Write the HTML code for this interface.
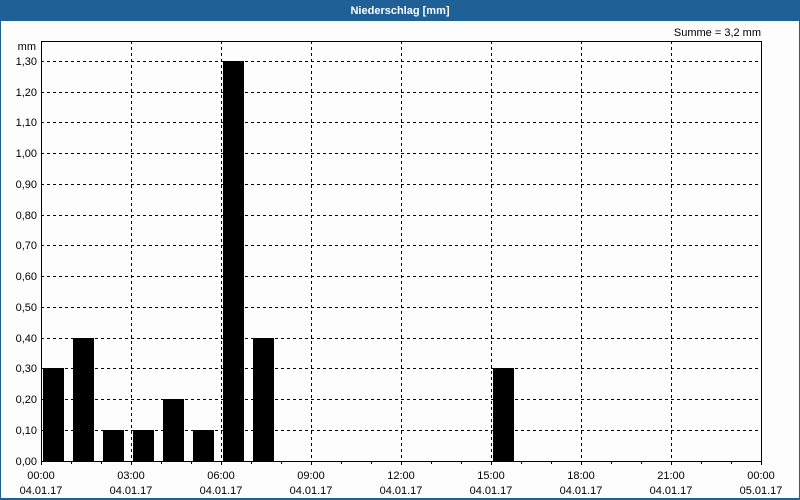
<!DOCTYPE html>
<html><head><meta charset="utf-8"><style>
html,body{margin:0;padding:0;width:800px;height:500px;overflow:hidden;background:#fff}
svg{display:block}
text{font-family:"Liberation Sans",sans-serif;font-size:11px;fill:#000}
</style></head><body>
<svg width="800" height="500" viewBox="0 0 800 500">
<rect x="0" y="0" width="800" height="500" fill="#1f6196"/>
<rect x="1" y="21" width="798" height="477" fill="#fdfdfd"/>
<text x="400" y="14" text-anchor="middle" style="font-weight:bold;fill:#fff">Niederschlag [mm]</text>
<text x="761" y="36" text-anchor="end">Summe = 3,2 mm</text>
<text x="36" y="50" text-anchor="end">mm</text>
<g stroke="#000" stroke-width="1" stroke-dasharray="3,3" shape-rendering="crispEdges">
<line x1="41" x2="761" y1="61.5" y2="61.5"/><line x1="41" x2="761" y1="92.5" y2="92.5"/><line x1="41" x2="761" y1="122.5" y2="122.5"/><line x1="41" x2="761" y1="153.5" y2="153.5"/><line x1="41" x2="761" y1="184.5" y2="184.5"/><line x1="41" x2="761" y1="215.5" y2="215.5"/><line x1="41" x2="761" y1="245.5" y2="245.5"/><line x1="41" x2="761" y1="276.5" y2="276.5"/><line x1="41" x2="761" y1="307.5" y2="307.5"/><line x1="41" x2="761" y1="338.5" y2="338.5"/><line x1="41" x2="761" y1="368.5" y2="368.5"/><line x1="41" x2="761" y1="399.5" y2="399.5"/><line x1="41" x2="761" y1="430.5" y2="430.5"/>
<line y1="41" y2="461" x1="131.5" x2="131.5"/><line y1="41" y2="461" x1="221.5" x2="221.5"/><line y1="41" y2="461" x1="311.5" x2="311.5"/><line y1="41" y2="461" x1="401.5" x2="401.5"/><line y1="41" y2="461" x1="491.5" x2="491.5"/><line y1="41" y2="461" x1="581.5" x2="581.5"/><line y1="41" y2="461" x1="671.5" x2="671.5"/>
</g>
<g fill="#000">
<rect x="43" y="368" width="21" height="93"/>
<rect x="73" y="338" width="21" height="123"/>
<rect x="103" y="430" width="21" height="31"/>
<rect x="133" y="430" width="21" height="31"/>
<rect x="163" y="399" width="21" height="62"/>
<rect x="193" y="430" width="21" height="31"/>
<rect x="223" y="61" width="21" height="400"/>
<rect x="253" y="338" width="21" height="123"/>
<rect x="493" y="368" width="21" height="93"/>
</g>
<rect x="41.5" y="41.5" width="720" height="420" fill="none" stroke="#000" shape-rendering="crispEdges"/>
<g stroke="#000" shape-rendering="crispEdges">
<path d="M41.5 461v4M71.5 461v3M101.5 461v3M131.5 461v4M161.5 461v3M191.5 461v3M221.5 461v4M251.5 461v3M281.5 461v3M311.5 461v4M341.5 461v3M371.5 461v3M401.5 461v4M431.5 461v3M461.5 461v3M491.5 461v4M521.5 461v3M551.5 461v3M581.5 461v4M611.5 461v3M641.5 461v3M671.5 461v4M701.5 461v3M731.5 461v3M761.5 461v4"/>
</g>
<g text-anchor="end">
<text x="37" y="65">1,30</text><text x="37" y="96">1,20</text><text x="37" y="126">1,10</text><text x="37" y="157">1,00</text><text x="37" y="188">0,90</text><text x="37" y="219">0,80</text><text x="37" y="249">0,70</text><text x="37" y="280">0,60</text><text x="37" y="311">0,50</text><text x="37" y="342">0,40</text><text x="37" y="372">0,30</text><text x="37" y="403">0,20</text><text x="37" y="434">0,10</text><text x="37" y="465">0,00</text>
</g>
<g text-anchor="middle">
<text x="41" y="479">00:00</text><text x="41" y="494">04.01.17</text>
<text x="131" y="479">03:00</text><text x="131" y="494">04.01.17</text>
<text x="221" y="479">06:00</text><text x="221" y="494">04.01.17</text>
<text x="311" y="479">09:00</text><text x="311" y="494">04.01.17</text>
<text x="401" y="479">12:00</text><text x="401" y="494">04.01.17</text>
<text x="491" y="479">15:00</text><text x="491" y="494">04.01.17</text>
<text x="581" y="479">18:00</text><text x="581" y="494">04.01.17</text>
<text x="671" y="479">21:00</text><text x="671" y="494">04.01.17</text>
<text x="761" y="479">00:00</text><text x="761" y="494">05.01.17</text>
</g>
</svg>
</body></html>
